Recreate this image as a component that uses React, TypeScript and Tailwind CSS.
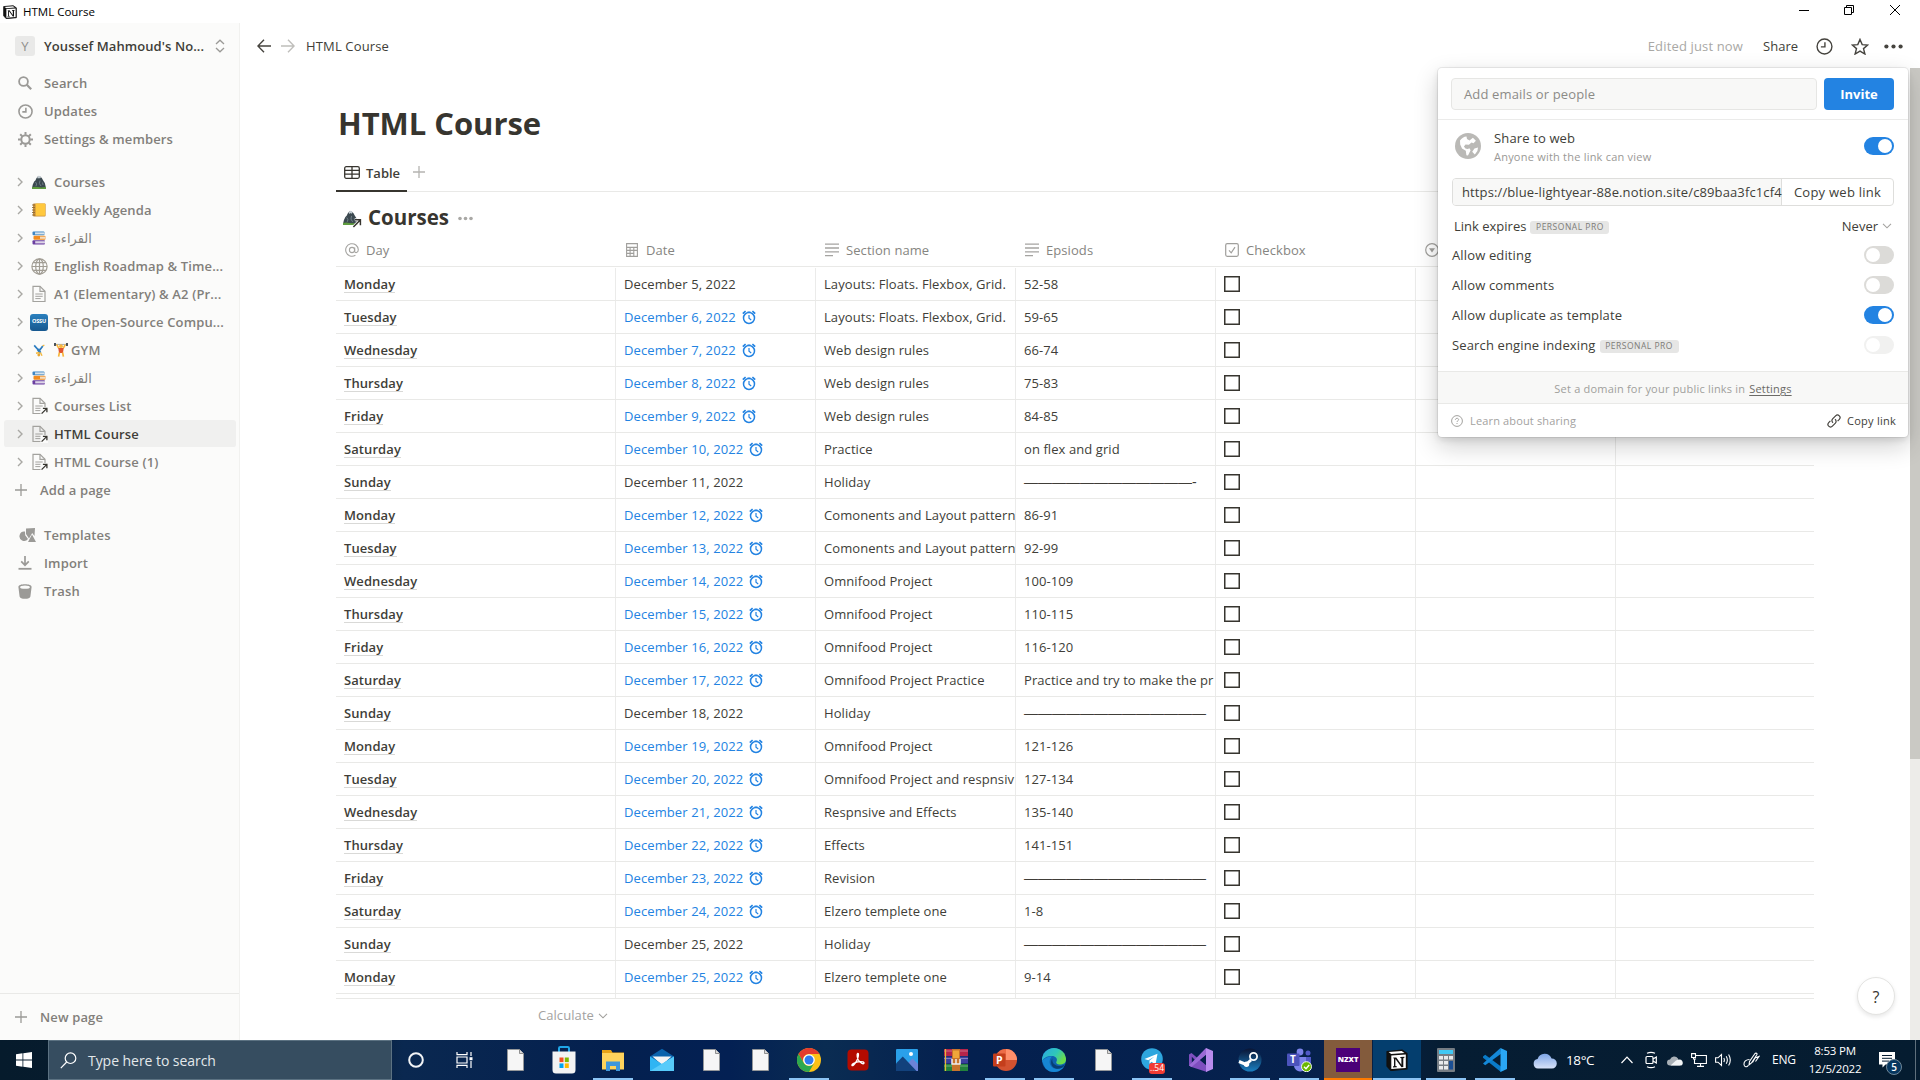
import React from "react";

const SANS = "font-['Open_Sans','Noto_Sans',sans-serif]";

type Row = [string, string, boolean, string, string];

const DASH = "—";
const rows: Row[] = [
  ["Monday", "December 5, 2022", false, "Layouts: Floats. Flexbox, Grid.", "52-58"],
  ["Tuesday", "December 6, 2022", true, "Layouts: Floats. Flexbox, Grid.", "59-65"],
  ["Wednesday", "December 7, 2022", true, "Web design rules", "66-74"],
  ["Thursday", "December 8, 2022", true, "Web design rules", "75-83"],
  ["Friday", "December 9, 2022", true, "Web design rules", "84-85"],
  ["Saturday", "December 10, 2022", true, "Practice", "on flex and grid"],
  ["Sunday", "December 11, 2022", false, "Holiday", DASH.repeat(12) + "-"],
  ["Monday", "December 12, 2022", true, "Comonents and Layout pattern", "86-91"],
  ["Tuesday", "December 13, 2022", true, "Comonents and Layout pattern", "92-99"],
  ["Wednesday", "December 14, 2022", true, "Omnifood Project", "100-109"],
  ["Thursday", "December 15, 2022", true, "Omnifood Project", "110-115"],
  ["Friday", "December 16, 2022", true, "Omnifood Project", "116-120"],
  ["Saturday", "December 17, 2022", true, "Omnifood Project Practice", "Practice and try to make the pr"],
  ["Sunday", "December 18, 2022", false, "Holiday", DASH.repeat(13)],
  ["Monday", "December 19, 2022", true, "Omnifood Project", "121-126"],
  ["Tuesday", "December 20, 2022", true, "Omnifood Project and respnsiv", "127-134"],
  ["Wednesday", "December 21, 2022", true, "Respnsive and Effects", "135-140"],
  ["Thursday", "December 22, 2022", true, "Effects", "141-151"],
  ["Friday", "December 23, 2022", true, "Revision", DASH.repeat(13)],
  ["Saturday", "December 24, 2022", true, "Elzero templete one", "1-8"],
  ["Sunday", "December 25, 2022", false, "Holiday", DASH.repeat(13)],
  ["Monday", "December 25, 2022", true, "Elzero templete one", "9-14"],
];

/* ---------- small icons ---------- */

function Mountain({ size = 14 }: { size?: number }) {
  return (
    <svg width={size} height={size} viewBox="0 0 14 14">
      <path d="M0 13 .8 9.5 2.2 6.6 3.4 5.4 4.4 3.2 5.8 1.4 8.2 1.4 9.8 3 11.2 5.6 12.8 8 14 13Z" fill="#3c4950" />
      <path d="M5.2 2.6 6.4.8 8 1 9 2.6 7.8 3.6 7 2.8 6 3.8Z" fill="#c4cdd2" />
      <path d="M3.5 7 4.6 9 4 11M8 5.5 7.4 8.5 9 11M10.5 7.5 11 10" stroke="#7b8a93" strokeWidth=".8" fill="none" />
      <path d="M0 12.2Q3 11.3 6 12.1T14 12V14H0Z" fill="#5f9c3f" />
    </svg>
  );
}

function Ledger() {
  return (
    <svg width="14" height="14" viewBox="0 0 14 14">
      <rect x="1" y=".5" width="12.6" height="13" rx="1" fill="#c98f3a" />
      <rect x="3.6" y=".5" width="9.6" height="12.2" rx=".8" fill="#ffc83d" />
      <path d="M0 2h3M0 4.5h3M0 7h3M0 9.5h3M0 12h3" stroke="#8a6a3a" strokeWidth=".9" />
    </svg>
  );
}

function Books() {
  return (
    <svg width="14" height="14" viewBox="0 0 14 14">
      <rect x=".5" y=".5" width="12" height="3.8" rx="1" fill="#3f87c4" />
      <rect x="3" y="1.4" width="9.5" height="2" fill="#d7e3ec" />
      <rect x="1.5" y="4.7" width="12" height="4" rx="1" fill="#f28b1d" />
      <rect x="8" y="5.6" width="5.6" height="2.2" fill="#f3dcc0" />
      <rect x=".5" y="9.2" width="12.5" height="4.3" rx="1" fill="#6b3fa0" />
      <rect x="3.2" y="10.2" width="9.8" height="2.2" fill="#ddd4e8" />
    </svg>
  );
}

function GlobeLines() {
  return (
    <svg width="17" height="17" viewBox="0 0 17 17" fill="none" stroke="#a19d94" strokeWidth="1.2">
      <circle cx="8.5" cy="8.5" r="7.6" />
      <ellipse cx="8.5" cy="8.5" rx="3.8" ry="7.6" />
      <path d="M8.5 1v15M1 8.5h15M2.2 4.7h12.6M2.2 12.3h12.6" />
    </svg>
  );
}

function Page({ linked = false }: { linked?: boolean }) {
  return (
    <svg width="17" height="18" viewBox="0 0 17 18" fill="none">
      <path d="M2 1.3h7L14 6.3V16.5H2Z" stroke="#a3a29e" strokeWidth="1.2" />
      <path d="M9 1.3V6.3h5" stroke="#a3a29e" strokeWidth="1.2" />
      <path d="M4.3 9h7.4M4.3 11.3h7.4M4.3 13.6h5.4" stroke="#a3a29e" strokeWidth="1" />
      {linked && (
        <>
          <path d="M9.5 10h7.5v8H9.5Z" fill="#fbfbfa" />
          <path d="M10.6 16.6 15.6 11.6M11.9 11.3h4v4" stroke="#37352f" strokeWidth="1.3" />
        </>
      )}
    </svg>
  );
}

function Ossu() {
  return (
    <span className="flex h-[17px] w-[18px] shrink-0 items-center justify-center rounded-[3px] bg-gradient-to-b from-[#2a80be] to-[#17588f]">
      <span className="text-[5.5px] leading-none font-bold tracking-[-0.1px] text-white">OSSU</span>
    </span>
  );
}

function Cartwheel() {
  return (
    <svg width="12" height="14" viewBox="0 0 12 14" fill="none">
      <path d="M5.8 7.5 1.2 2.4M6.8 7 9.8 3" stroke="#2b7cc0" strokeWidth="1.7" />
      <path d="M5 6 7.2 10" stroke="#2b7cc0" strokeWidth="2.6" />
      <path d="M6.6 9.5 3 10.2M7.4 9.5 9 12.8M9.6 3 11.4 2" stroke="#f5b83d" strokeWidth="1.4" />
      <circle cx="5.8" cy="12" r="1.4" fill="#e8a52e" />
    </svg>
  );
}

function Lifter() {
  return (
    <svg width="14" height="14" viewBox="0 0 14 14" fill="none">
      <path d="M.5 1.4h13" stroke="#8d959b" strokeWidth=".8" />
      <path d="M1 0v3M13 0v3" stroke="#3c454c" strokeWidth="1.8" />
      <path d="M2.7 1.5 4.8 5.4M11.3 1.5 9.2 5.4" stroke="#f7b63c" strokeWidth="1.6" />
      <circle cx="7" cy="3.2" r="1.9" fill="#f7b63c" />
      <path d="M4.3 5h5.4L9 10H5Z" fill="#e0542f" />
      <path d="M5.4 9.5 4.6 13.6M8.6 9.5 9.4 13.6" stroke="#f7b63c" strokeWidth="1.7" />
    </svg>
  );
}

function Caret() {
  return (
    <svg className="w-2 shrink-0" width="8" height="10" viewBox="0 0 8 10" fill="none" stroke="#a9a8a4" strokeWidth="1.4">
      <path d="M2 1 6 5 2 9" />
    </svg>
  );
}

function ChevDown({ color = "#a3a29f" }: { color?: string }) {
  return (
    <svg width="10" height="6" viewBox="0 0 10 6" fill="none" stroke={color} strokeWidth="1.1">
      <path d="M1 .8 5 4.8 9 .8" />
    </svg>
  );
}

function Plus({ color = "#9b9a97" }: { color?: string }) {
  return (
    <svg width="12" height="12" viewBox="0 0 12 12" stroke={color} strokeWidth="1.3">
      <path d="M6 0v12M0 6h12" />
    </svg>
  );
}

function Alarm() {
  return (
    <svg className="ml-[6px] shrink-0" width="14" height="15" viewBox="0 0 14 15" fill="none" stroke="#2383e2">
      <circle cx="7" cy="8" r="5.5" strokeWidth="1.5" />
      <path d="M7 5v3.2L9.2 10" strokeWidth="1.2" />
      <path d="M.8 3.6 3.6 1.2M13.2 3.6 10.4 1.2" strokeWidth="1.7" />
      <path d="M5.4 1.9h3.2" strokeWidth=".8" />
    </svg>
  );
}

function Clock({ size, color, w = 1.5 }: { size: number; color: string; w?: number }) {
  return (
    <svg width={size} height={size} viewBox="0 0 16 16" fill="none" stroke={color} strokeWidth={w}>
      <circle cx="8" cy="8" r="7" />
      <path d="M8.4 4v4.4H4.6" />
    </svg>
  );
}

/* ---------- sidebar ---------- */

function SideAction({ icon, label }: { icon: React.ReactNode; label: string }) {
  return (
    <div className="flex h-7 items-center">
      <span className="flex w-[50px] shrink-0 justify-center">{icon}</span>
      <span className="-ml-[6px]">{label}</span>
    </div>
  );
}

const ARABIC = "pt-px font-['DejaVu_Sans',sans-serif] font-normal text-[13px] tracking-normal";

const pages: { icon: React.ReactNode; label: React.ReactNode; ls?: string; active?: boolean }[] = [
  { icon: <Mountain />, label: "Courses" },
  { icon: <Ledger />, label: "Weekly Agenda" },
  { icon: <Books />, label: "القراءة", ls: ARABIC },
  { icon: <GlobeLines />, label: "English Roadmap & Time..." },
  { icon: <Page />, label: "A1 (Elementary) & A2 (Pr..." },
  { icon: <Ossu />, label: "The Open-Source Compu..." },
  { icon: <Cartwheel />, label: (<span className="flex items-center gap-[3px]"><Lifter />GYM</span>) },
  { icon: <Books />, label: "القراءة", ls: ARABIC },
  { icon: <Page linked />, label: "Courses List" },
  { icon: <Page linked />, label: "HTML Course", active: true },
  { icon: <Page linked />, label: "HTML Course (1)" },
];

function Sidebar() {
  return (
    <aside className="flex w-[240px] shrink-0 flex-col border-r border-[#f1f1ef] bg-[#fbfbfa] text-[13px] leading-5 font-semibold tracking-[0.14px] whitespace-nowrap text-[#827f7b]">
      <div className="flex h-[46px] items-center pl-[15px] text-[#403e38]">
        <span className="flex size-5 items-center justify-center rounded-[3px] bg-[#e9e9e8] text-[13px] font-normal text-[#8f8e8b]">Y</span>
        <span className="ml-[9px] w-[160px] tracking-[0.08px]">Youssef Mahmoud's No...</span>
        <svg className="ml-[11px]" width="10" height="14" viewBox="0 0 10 14" fill="none" stroke="#9b9a97" strokeWidth="1.3">
          <path d="M1 5 5 1.2 9 5M1 9 5 12.8 9 9" />
        </svg>
      </div>
      <SideAction
        label="Search"
        icon={
          <svg width="14" height="14" viewBox="0 0 14 14" fill="none" stroke="#9b9a97">
            <circle cx="5.5" cy="5.5" r="4.4" strokeWidth="1.8" />
            <path d="M8.8 8.8 13.2 13.2" strokeWidth="2.2" />
          </svg>
        }
      />
      <SideAction label="Updates" icon={<Clock size={15} color="#9b9a97" w={1.7} />} />
      <SideAction
        label="Settings & members"
        icon={
          <svg width="15" height="15" viewBox="0 0 15 15" fill="none" stroke="#9b9a97">
            <circle cx="7.5" cy="7.5" r="4.2" strokeWidth="2" />
            <path d="M7.5 0v2.8M7.5 12.2V15M0 7.5h2.8M12.2 7.5H15M2.2 2.2 4.2 4.2M10.8 10.8 12.8 12.8M2.2 12.8 4.2 10.8M10.8 4.2 12.8 2.2" strokeWidth="2" />
          </svg>
        }
      />
      <div className="mt-[15px]">
        {pages.map((p, i) => (
          <div
            key={i}
            className={
              p.active
                ? "mr-[3px] ml-1 flex h-7 items-center rounded-[3px] border-b border-[#fbfbfa] bg-[#f0f0ef] pl-3 text-[#403e38]"
                : "mr-[3px] ml-1 flex h-7 items-center pl-3"
            }
          >
            <Caret />
            <span className="mx-[6px] flex w-[18px] shrink-0 justify-center">{p.icon}</span>
            <span className={p.ls ?? ""}>{p.label}</span>
          </div>
        ))}
      </div>
      <div className="flex h-7 items-center pl-[15px]">
        <Plus />
        <span className="ml-[13px]">Add a page</span>
      </div>
      <div className="mt-[17px]">
        <SideAction
          label="Templates"
          icon={
            <svg className="ml-1" width="17" height="14" viewBox="0 0 17 14" fill="#9b9a97">
              <path d="M7 .5 16 0 15.5 8 13.2 5 10 10.5 7 6Z" />
              <path d="M6 3.6A4.7 4.7 0 1 0 9 11L6.2 7.2Z" />
              <path d="M13 6.5 17 14H9Z" />
            </svg>
          }
        />
        <SideAction
          label="Import"
          icon={
            <svg width="14" height="14" viewBox="0 0 14 14" fill="none" stroke="#9b9a97">
              <path d="M7 0v9M3.2 5.4 7 9.2 10.8 5.4" strokeWidth="1.7" />
              <path d="M.5 12.8h13" strokeWidth="1.8" />
            </svg>
          }
        />
        <SideAction
          label="Trash"
          icon={
            <svg width="14" height="15" viewBox="0 0 14 15">
              <path d="M.4 3C.4 1 3.2.2 7 .2S13.6 1 13.6 3L12.4 12.4C12.2 14 10 14.8 7 14.8S1.8 14 1.6 12.4Z" fill="#9b9a97" />
              <ellipse cx="7" cy="3.2" rx="4.9" ry="1.6" fill="#fbfbfa" />
            </svg>
          }
        />
      </div>
      <div className="mt-auto flex h-[47px] items-center border-t border-[#e9e9e7] pl-[15px]">
        <Plus />
        <span className="ml-[13px]">New page</span>
      </div>
    </aside>
  );
}

/* ---------- table ---------- */

const GRID = "grid grid-cols-[280px_200px_200px_200px_200px_200px_198px]";
const CELL = "flex h-full items-center overflow-hidden border-r border-[#ebebea] pl-2 whitespace-nowrap";

function TextIcon() {
  return (
    <svg width="14" height="14" viewBox="0 0 14 14" stroke="#a5a4a1" strokeWidth="1.3">
      <path d="M0 1.2h14M0 5h14M0 8.8h14M0 12.6h8" />
    </svg>
  );
}

function HeaderCell({ icon, label }: { icon: React.ReactNode; label: string }) {
  return (
    <div className="flex items-center pl-[9px]">
      <span className="flex w-[14px] justify-center">{icon}</span>
      <span className="ml-[7px]">{label}</span>
    </div>
  );
}

function Table() {
  return (
    <div className="w-[1478px] text-[13px] leading-5 tracking-[0.08px] text-[#403e38]">
      <div className={GRID + " h-[33px] border-b border-[#e9e9e7] text-[#868581]"}>
        <HeaderCell
          label="Day"
          icon={
            <svg width="14" height="14" viewBox="0 0 14 14" fill="none" stroke="#a5a4a1" strokeWidth="1.1">
              <circle cx="7" cy="7" r="2.6" />
              <path d="M9.7 4.4V8.2C9.7 10.4 13.3 10 13.3 6.8A6.3 6.3 0 1 0 10.4 12.3" />
            </svg>
          }
        />
        <HeaderCell
          label="Date"
          icon={
            <svg width="12" height="14" viewBox="0 0 12 14" fill="none" stroke="#a09f9c" strokeWidth="1.1">
              <path d="M.6.6h10.8v12.8H.6ZM.6 4.4h10.8M.6 7.4h10.8M.6 10.4h7M4.1 4.4v9M7.8 4.4v9" />
            </svg>
          }
        />
        <HeaderCell label="Section name" icon={<TextIcon />} />
        <HeaderCell label="Epsiods" icon={<TextIcon />} />
        <HeaderCell
          label="Checkbox"
          icon={
            <svg width="14" height="14" viewBox="0 0 14 14" fill="none" stroke="#a09f9c" strokeWidth="1.2">
              <rect x=".7" y=".7" width="12.6" height="12.6" rx="1.5" />
              <path d="M4 7.4 6.2 9.8 10 4.2" />
            </svg>
          }
        />
        <HeaderCell
          label=""
          icon={
            <svg width="14" height="14" viewBox="0 0 14 14" fill="none" stroke="#a09f9c" strokeWidth="1.2">
              <circle cx="7" cy="7" r="6.3" />
              <path d="M4 5.2h6L7 9.6Z" fill="#a09f9c" stroke="none" />
            </svg>
          }
        />
      </div>
      <div className="mt-px">
        {rows.map(([day, date, remind, section, ep], i) => (
          <div key={i} className={GRID + " h-[33px] border-b border-[#e9e9e7]"}>
            <div className={CELL}>
              <span className="border-b border-[#d9d9d7] pt-[2px] leading-[15px] font-semibold tracking-[0.08px]">{day}</span>
            </div>
            <div className={remind ? CELL + " text-[#2383e2]" : CELL}>
              <span className="tracking-[0.1px]">{date}</span>
              {remind && <Alarm />}
            </div>
            <div className={CELL}>{section}</div>
            <div className={CELL}>
              <span className={ep.startsWith(DASH) ? "font-['Liberation_Sans',sans-serif] text-[14px] tracking-normal" : ""}>{ep}</span>
            </div>
            <div className={CELL}>
              <svg width="16" height="16" viewBox="0 0 16 16" fill="none" stroke="#37352f" strokeWidth="1.5">
                <path d="M.75.75h14.5v14.5H.75Z" />
              </svg>
            </div>
            <div className={CELL} />
            <div />
          </div>
        ))}
        <div className={GRID + " h-[5px] border-b border-[#e9e9e7]"}>
          {[0, 1, 2, 3, 4, 5].map((i) => (
            <div key={i} className="h-full border-r border-[#ebebea]" />
          ))}
        </div>
      </div>
      <div className="flex h-[33px] w-[272px] items-center justify-end gap-1 text-[#a3a29f]">
        <span className="pb-px">Calculate</span>
        <ChevDown />
      </div>
    </div>
  );
}

/* ---------- share panel ---------- */

function Toggle({ on = false, faint = false }: { on?: boolean; faint?: boolean }) {
  const tone = on
    ? "justify-end bg-[#2383e2]"
    : faint
      ? "justify-start bg-[#f1f1f0]"
      : "justify-start bg-[#dcdbd8]";
  return (
    <span className={"flex h-[18px] w-[30px] items-center rounded-full p-[2px] " + tone}>
      <span className="size-[14px] rounded-full bg-white" />
    </span>
  );
}

function ProBadge() {
  return (
    <span className="mt-[3px] ml-1 flex h-[13px] w-[79px] items-center justify-center rounded-[3px] bg-[#e6e6e5] text-[8.5px] leading-none tracking-[0.5px] text-[#7d7c78]">
      PERSONAL PRO
    </span>
  );
}

function OptionRow({ label, children, pro }: { label: string; children: React.ReactNode; pro?: boolean }) {
  return (
    <div className="flex h-[30px] items-center">
      <span>{label}</span>
      {pro && <ProBadge />}
      <span className="ml-auto">{children}</span>
    </div>
  );
}

function SharePanel() {
  return (
    <div className="absolute top-[45px] left-[1198px] flex h-[369px] w-[470px] flex-col overflow-hidden rounded-[4px] bg-white text-[13px] leading-5 tracking-[0.14px] whitespace-nowrap text-[#403e38] shadow-[0_0_0_1px_rgba(15,15,15,0.07),0_3px_6px_rgba(15,15,15,0.1),0_9px_24px_rgba(15,15,15,0.2)]">
      <div className="flex h-[52px] items-center border-b border-[#ebebea] pl-[13px]">
        <div className="flex h-8 w-[366px] items-center rounded-[4px] border border-[#e6e6e4] bg-[#f8f8f7] pl-3 text-[#8c8b87]">
          Add emails or people
        </div>
        <div className="ml-[7px] flex h-8 w-[70px] items-center justify-center rounded-[4px] bg-[#2383e2] font-bold tracking-normal text-white">
          Invite
        </div>
      </div>
      <div className="flex h-[52px] items-center pr-[14px] pl-[17px]">
        <svg width="26" height="26" viewBox="0 0 26 26">
          <circle cx="13" cy="13" r="13" fill="#bab9b6" />
          <path d="M5 7.5C6.5 5 9 3.6 11.5 3.4L12 6l2.5 1.6 3.4-2.8 3 3-2.4 2.4-2-.6-2.6 2.2-3.4-.4-1.5 2.2 2.4 1.6h3l1.2 2-2.6 5.4-1.6-.4-.6-4.4L7 15.6 5.2 11.4Z" fill="#fff" />
          <path d="M19.5 15.5 23 14.4 22.4 18l-2.6 3.4-2.6-2.6Z" fill="#fff" />
          <path d="M9 13.6 11.5 12.4 15.2 14.6 12.8 16 10.4 15.6Z" fill="#bab9b6" />
        </svg>
        <div className="ml-[13px] flex flex-col pt-[2px]">
          <span className="leading-[19px]">Share to web</span>
          <span className="text-[11px] leading-[18px] tracking-[0.22px] text-[#9a9996]">Anyone with the link can view</span>
        </div>
        <span className="ml-auto">
          <Toggle on />
        </span>
      </div>
      <div className="mt-[6px] ml-[14px] flex h-7 w-[442px] overflow-hidden rounded-[4px] border border-[#dededc]">
        <div className="flex w-[329px] items-center border-r border-[#dededc] bg-[#f8f8f7] pl-[9px] tracking-[0.12px]">
          https://blue-lightyear-88e.notion.site/c89baa3fc1cf4
        </div>
        <div className="flex flex-1 items-center justify-center tracking-[0.25px]">Copy web link</div>
      </div>
      <div className="mt-[6px] flex h-7 items-center pr-[16px] pl-4">
        <span className="tracking-normal">Link expires</span>
        <ProBadge />
        <span className="mr-[4px] ml-auto tracking-normal">Never</span>
        <ChevDown />
      </div>
      <div className="px-[14px]">
        <OptionRow label="Allow editing"><Toggle /></OptionRow>
        <OptionRow label="Allow comments"><Toggle /></OptionRow>
        <OptionRow label="Allow duplicate as template"><Toggle on /></OptionRow>
        <OptionRow label="Search engine indexing" pro><Toggle faint /></OptionRow>
      </div>
      <div className="mt-auto flex h-[33px] items-center justify-center gap-1 border-y border-[#e9e9e7] bg-[#f8f8f7] pt-[3px] text-[11px] tracking-[0.2px] text-[#a09f9c]">
        <span>Set a domain for your public links in</span>
        <span className="text-[#6b6a66] underline underline-offset-2">Settings</span>
      </div>
      <div className="flex h-[33px] items-center pr-3 pl-[13px] text-[11px]">
        <svg width="12" height="12" viewBox="0 0 12 12" fill="none" stroke="#a3a29f">
          <circle cx="6" cy="6" r="5.4" />
          <path d="M4.4 4.8C4.4 2.8 7.6 2.8 7.6 4.7 7.6 5.8 6 5.8 6 7M6 8v1" />
        </svg>
        <span className="ml-[7px] pt-px tracking-[0.15px] text-[#a3a29f]">Learn about sharing</span>
        <svg className="ml-auto" width="14" height="14" viewBox="0 0 14 14" fill="none" stroke="#45433e" strokeWidth="1.2">
          <path d="M6 8.8C4.6 7.6 4.6 6 5.6 4.9L8.6 1.8C9.7.7 11.2.7 12.3 1.8 13.3 2.8 13.2 4.4 12.3 5.4L10.6 7.1" />
          <path d="M8 5.2C9.4 6.4 9.4 8 8.4 9.1L5.4 12.2C4.3 13.3 2.8 13.3 1.7 12.2.7 11.2.8 9.6 1.7 8.6L3.4 6.9" />
        </svg>
        <span className="ml-[6px] pt-px tracking-[0.25px]">Copy link</span>
      </div>
    </div>
  );
}

/* ---------- main area ---------- */

function Main() {
  return (
    <main className="relative flex flex-1 flex-col bg-white">
      <header className="flex h-[45px] shrink-0 items-center pt-px pr-[17px] pl-[17px] text-[13px] leading-5 tracking-[0.15px] text-[#403e38]">
        <svg width="14" height="14" viewBox="0 0 14 14" fill="none" stroke="#45433e" strokeWidth="1.4">
          <path d="M14 7H1M7 .8.9 7 7 13.2" />
        </svg>
        <svg className="ml-[10px]" width="14" height="14" viewBox="0 0 14 14" fill="none" stroke="#bfbebb" strokeWidth="1.4">
          <path d="M0 7h13M7 .8 13.1 7 7 13.2" />
        </svg>
        <span className="ml-[11px]">HTML Course</span>
        <span className="ml-auto text-[#a9a8a5]">Edited just now</span>
        <span className="ml-5 tracking-normal">Share</span>
        <span className="ml-[18px]"><Clock size={17} color="#45433e" w={1.3} /></span>
        <svg className="ml-[18px]" width="18" height="17" viewBox="0 0 18 17" fill="none" stroke="#45433e" strokeWidth="1.4">
          <path d="M9 1.4 11.2 6.6 16.7 7 12.5 10.6 13.9 16 9 13.1 4.1 16 5.5 10.6 1.3 7 6.8 6.6Z" />
        </svg>
        <svg className="ml-[15px]" width="19" height="5" viewBox="0 0 19 5" fill="#45433e">
          <circle cx="2.4" cy="2.5" r="2.1" />
          <circle cx="9.5" cy="2.5" r="2.1" />
          <circle cx="16.6" cy="2.5" r="2.1" />
        </svg>
      </header>
      <div className="flex flex-1">
        <div className="flex-1 pl-24">
          <h1 className="mt-[33px] ml-[2px] h-[44px] text-[31px] leading-[44px] font-bold tracking-[-0.05px] text-[#37352f]">HTML Course</h1>
          <div className="mt-[8px] flex h-[39px] w-[1478px] items-start shadow-[inset_0_-1px_0_#e9e9e7]">
            <div className="flex h-[39px] w-[71px] items-center border-b-2 border-[#37352f] pt-px pl-2 text-[13px] leading-5 font-semibold text-[#403e38]">
              <svg width="16" height="13" viewBox="0 0 16 13" fill="none" stroke="#37352f" strokeWidth="1.3">
                <rect x=".7" y=".7" width="14.6" height="11.6" rx="1.5" />
                <path d="M.7 4.3h14.6M.7 8.2h14.6M8 .7v11.6" />
              </svg>
              <span className="ml-[6px] pt-[2px]">Table</span>
            </div>
            <span className="mt-[13px] ml-[6px]"><Plus color="#b5b4b1" /></span>
          </div>
          <div className="mt-[10px] flex h-[32px] items-center pl-[7px] text-[#37352f]">
            <span className="relative h-[16px] w-[19px]">
              <Mountain size={15} />
              <svg className="absolute right-0 -bottom-[2px]" width="10" height="10" viewBox="0 0 10 10" fill="none">
                <path d="M1.4 9 8 2.2M3 1.8h5.4v5.4" stroke="#fff" strokeWidth="3" />
                <path d="M1.4 9 8 2.2M3 1.8h5.4v5.4" stroke="#37352f" strokeWidth="1.5" />
              </svg>
            </span>
            <span className="ml-[6px] pb-[2px] text-[20.5px] leading-[30px] font-bold">Courses</span>
            <svg className="ml-[9px]" width="15" height="5" viewBox="0 0 15 5" fill="#a9a8a5">
              <circle cx="2" cy="2.5" r="1.8" />
              <circle cx="7.5" cy="2.5" r="1.8" />
              <circle cx="13" cy="2.5" r="1.8" />
            </svg>
          </div>
          <Table />
        </div>
        <div className="w-[10px] shrink-0 bg-[#edece9]">
          <div className="h-[691px] bg-[#cac9c4]" />
        </div>
      </div>
      <div className="absolute top-[954px] left-[1617px] flex size-[38px] items-center justify-center rounded-full border border-[#e4e4e2] bg-white pt-px text-[16px] text-[#37352f] shadow-[0_2px_4px_rgba(15,15,15,0.1)]">
        ?
      </div>
      <SharePanel />
    </main>
  );
}

/* ---------- taskbar ---------- */

function Blank() {
  return (
    <svg width="17" height="22" viewBox="0 0 17 22">
      <path d="M.5.5h12L16.5 4.5V21.5H.5Z" fill="#f6f6f6" stroke="#9b9b98" strokeWidth=".8" />
      <path d="M12.5.5V4.5h4" fill="#d9d9d9" stroke="#777" strokeWidth=".8" />
    </svg>
  );
}

const apps: { icon: React.ReactNode; state?: "open" | "nzxt" | "notion" }[] = [
  { icon: <Blank /> },
  {
    icon: (
      <svg width="24" height="28" viewBox="0 0 24 28">
        <path d="M7 6V2.2C7 1.4 7.6 1 8.3 1h7.4c.7 0 1.3.4 1.3 1.2V6" fill="none" stroke="#1fa7e8" strokeWidth="2" />
        <path d="M.5 5.5h23V24a3.5 3.5 0 0 1-3.5 3.5H4A3.5 3.5 0 0 1 .5 24Z" fill="#f3f3f3" />
        <path d="M7.5 11.5h4v4.6h-4Z" fill="#f25022" />
        <path d="M12.8 11.5h4v4.6h-4Z" fill="#7fba00" />
        <path d="M7.5 17.4h4V22h-4Z" fill="#00a4ef" />
        <path d="M12.8 17.4h4V22h-4Z" fill="#ffb900" />
      </svg>
    ),
  },
  {
    state: "open",
    icon: (
      <svg width="22" height="22" viewBox="0 0 22 22">
        <path d="M0 1h9l1.5 2.4H22V20H0Z" fill="#e8a317" />
        <path d="M0 4h22v16.5H0Z" fill="#ffd35c" />
        <path d="M4 12.5h14V22h-4v-5H8v5H4Z" fill="#3f97dc" />
      </svg>
    ),
  },
  {
    icon: (
      <svg width="24" height="24" viewBox="0 0 24 24">
        <path d="M0 8.5 12 .8l12 7.7V13H0Z" fill="#0a62ac" />
        <path d="M2.5 8.5h19L12 17Z" fill="#f4f4f4" />
        <path d="M0 8.5 12 16 24 8.5V23H0Z" fill="#2fb5f3" />
        <path d="M0 23 24 8.5V23Z" fill="#57cbfa" />
      </svg>
    ),
  },
  { icon: <Blank /> },
  { icon: <Blank /> },
  {
    state: "open",
    icon: (
      <svg width="24" height="24" viewBox="0 0 24 24">
        <circle cx="12" cy="12" r="12" fill="#fbc116" />
        <path d="M1.6 6A12 12 0 0 1 22.4 6H12A6 6 0 0 0 6.8 15Z" fill="#e33b2e" />
        <path d="M1.6 6A12 12 0 0 0 12 24L17.2 15A6 6 0 0 1 6.8 15Z" fill="#2da94f" />
        <circle cx="12" cy="12" r="5.8" fill="#fff" />
        <circle cx="12" cy="12" r="4.5" fill="#2f7bee" />
      </svg>
    ),
  },
  {
    icon: (
      <svg width="22" height="22" viewBox="0 0 22 22">
        <rect x=".5" y=".5" width="21" height="21" rx="4" fill="#b30b00" />
        <path d="M10.6 4.5C12.4 4 11 9.5 9.8 11.6 8.4 14.4 5.6 17.6 5 16.4 4.4 15 9 12.8 12.4 12.6c2.8-.2 5 .6 4.6 1.6-.8 1.4-4-.2-5.6-3.2C10.2 8.6 9.6 5 10.6 4.5Z" fill="none" stroke="#fff" strokeWidth="1.3" />
      </svg>
    ),
  },
  {
    icon: (
      <svg width="22" height="22" viewBox="0 0 22 22">
        <rect width="22" height="22" rx="1" fill="#2aa0ea" />
        <path d="M11 15 16.5 9.5 22 15v7H11Z" fill="#6d83d8" />
        <path d="M0 14.5 6.8 7.5 20.5 22H0Z" fill="#12417c" />
        <circle cx="15" cy="5" r="2" fill="#fff" />
      </svg>
    ),
  },
  {
    icon: (
      <svg width="24" height="22" viewBox="0 0 24 22">
        <path d="M0 0h24v7H0Z" fill="#b5244a" />
        <path d="M0 7.5h24v7H0Z" fill="#3c3f9e" />
        <path d="M0 15h24v7H0Z" fill="#22813c" />
        <path d="M0 2h24M0 9.5h24M0 17h24" stroke="#fff" strokeOpacity=".35" />
        <path d="M1.5 0v22" stroke="#e5b53a" strokeWidth="1.2" />
        <path d="M8 0h8v22H8Z" fill="#c8742c" />
        <path d="M9 1.5h6V9H9Z" fill="#f0a63a" />
        <path d="M8 10v5h8v-5M12 10v5" stroke="#eee" strokeWidth="1.5" fill="none" />
      </svg>
    ),
  },
  {
    state: "open",
    icon: (
      <svg width="24" height="22" viewBox="0 0 24 22">
        <circle cx="13" cy="11" r="11" fill="#d35230" />
        <path d="M13 0A11 11 0 0 1 24 11H13Z" fill="#ff8f6b" />
        <path d="M13 0A11 11 0 0 0 2 11H13Z" fill="#ed6c47" />
        <rect y="4.5" width="12.5" height="13" rx="1" fill="#c43e1c" />
        <text x="3" y="14.8" fontSize="10.5" fontWeight="700" fill="#fff">P</text>
      </svg>
    ),
  },
  {
    state: "open",
    icon: (
      <svg width="24" height="24" viewBox="0 0 24 24">
        <defs>
          <linearGradient id="edgeTop" x1="0" x2="1" y1="0" y2=".5">
            <stop offset="0" stopColor="#2aa7e6" />
            <stop offset=".6" stopColor="#2fc7b8" />
            <stop offset="1" stopColor="#6bdc4b" />
          </linearGradient>
          <clipPath id="edgeDisc">
            <circle cx="12" cy="12" r="12" />
          </clipPath>
        </defs>
        <g clipPath="url(#edgeDisc)">
          <path d="M0 0h24v24H0Z" fill="#0f62ae" />
          <path d="M0 0H24V12C24 15 21 16.5 18 16.5S13.5 15 14.5 13.5C16 10.5 13.5 8 10 8 5 8 1 10 0 13.5Z" fill="url(#edgeTop)" />
          <path d="M10 8.5C7 11 6.5 16 10.5 19.5 14 22 19 21 22 18.5L20 24H5L0 13C3 9.5 7 8 10 8.5Z" fill="#1686d4" />
          <path d="M10.5 10.5C9.5 14 12 17.5 16.5 18 19 18.2 21.5 17.5 23 16.2 21 21 15 22 11.5 19.5 8.5 17 8.5 12.5 10.5 10.5Z" fill="#073f75" />
        </g>
      </svg>
    ),
  },
  { icon: <Blank /> },
  {
    state: "open",
    icon: (
      <span className="relative">
        <svg width="24" height="24" viewBox="0 0 24 24">
          <circle cx="12" cy="11" r="10.8" fill="#2ea6de" />
          <path d="M4.5 11 17.5 5.8 15.5 16.5 11.5 13.8 9.5 15.8V12.5L14.5 8.5 8.3 12.2Z" fill="#fff" />
        </svg>
        <span className="absolute top-[15px] left-[9px] flex h-[11px] w-4 items-center justify-center rounded-[3px] bg-[#f23c34] text-[8.5px] leading-none text-white">..54</span>
      </span>
    ),
  },
  {
    icon: (
      <svg width="24" height="24" viewBox="0 0 24 24">
        <path d="M0 6.5 2.5 5 18 18V24L2.5 19 0 17.5Z" fill="#7f4fbf" />
        <path d="M2.8 8.8 6 12 2.8 15.2Z" fill="#061f4c" />
        <path d="M0 17.5 17 0 18 6 2.5 19Z" fill="#9a6ad6" />
        <path d="M17 0 24 3V21L17 24V7Z" fill="#b98cee" />
        <path d="M17 7.5V16.5L11.5 12Z" fill="#061f4c" />
      </svg>
    ),
  },
  {
    state: "open",
    icon: (
      <svg width="24" height="24" viewBox="0 0 24 24">
        <defs>
          <linearGradient id="steamBg" x1="0" x2="0" y1="0" y2="1">
            <stop offset="0" stopColor="#0a1433" />
            <stop offset="1" stopColor="#1a7fc0" />
          </linearGradient>
        </defs>
        <circle cx="12" cy="12" r="11.5" fill="url(#steamBg)" />
        <circle cx="15.5" cy="8.5" r="3.6" fill="none" stroke="#fff" strokeWidth="1.8" />
        <path d="M1 13.5 8 16.5 13 12" stroke="#fff" strokeWidth="3" fill="none" />
        <circle cx="8.5" cy="16.3" r="2.7" fill="#fff" />
      </svg>
    ),
  },
  {
    state: "open",
    icon: (
      <svg width="25" height="24" viewBox="0 0 25 24">
        <circle cx="13" cy="4" r="3.4" fill="#7b83eb" />
        <circle cx="21" cy="5" r="2.5" fill="#5059c9" />
        <path d="M16 9h8v6.5a4 4 0 0 1-8 1Z" fill="#5059c9" />
        <path d="M7 9h12v8a6 6 0 0 1-12 1Z" fill="#7b83eb" />
        <rect y="5.5" width="12.5" height="12.5" rx="1" fill="#4b53bc" />
        <text x="3" y="15.3" fontSize="10" fontWeight="700" fill="#fff">T</text>
        <circle cx="19.5" cy="18.7" r="5" fill="#6bb700" stroke="#fff" strokeWidth=".9" />
        <path d="M17 18.7 19 20.7 22.2 17" fill="none" stroke="#fff" strokeWidth="1.4" />
      </svg>
    ),
  },
  {
    state: "nzxt",
    icon: (
      <span className="flex size-6 items-center justify-center bg-[#4b0078] text-[7.5px] leading-none font-extrabold text-white">NZXT</span>
    ),
  },
  {
    state: "notion",
    icon: <NotionLogo size={22} />,
  },
  {
    state: "open",
    icon: (
      <svg width="18" height="24" viewBox="0 0 18 24">
        <rect width="18" height="24" rx="1" fill="#767d84" />
        <rect x="2" y="2" width="14" height="4" fill="#41c8f4" />
        <path d="M2 8h4v3.5H2ZM7 8h4v3.5H7ZM12 8h4v3.5h-4ZM2 13h4v3.5H2ZM7 13h4v3.5H7ZM2 18h4v3.5H2ZM7 18h4v3.5H7Z" fill="#e8eaec" />
        <path d="M12 13h4v8.5h-4Z" fill="#1b4f94" />
      </svg>
    ),
  },
  {
    state: "open",
    icon: (
      <svg width="24" height="24" viewBox="0 0 24 24">
        <path d="M0 8.5 2.2 6.8 18 18.5V24L0 9.8Z" fill="#0a7bc8" />
        <path d="M0 15.5 17.5 0 18 5.8 2.2 17.3Z" fill="#1488d8" />
        <path d="M17.5 0 24 3V21L17.5 24Z" fill="#2aa7f5" />
      </svg>
    ),
  },
];

function NotionLogo({ size }: { size: number }) {
  return (
    <svg width={size} height={size} viewBox="0 0 22 22">
      <path d="M1 2.5 16 1 21 4.5V20L5 21.5 1 17Z" fill="#111" stroke="#111" strokeWidth="1.2" strokeLinejoin="round" />
      <path d="M2.6 3 15.6 1.9 18.5 4 5.2 5Z" fill="#fff" />
      <path d="M5.3 6.4 19.8 5.4V18.9L5.3 20Z" fill="#fff" />
      <path d="M7.2 8.6 10.3 8.4 15.4 15.8V9.3L14.3 9V8L18.4 7.8V8.7L17.3 9.2V18L15.5 18.2 9.4 10V16.9L10.8 17.3V18.2L7 18.5V17.5L8 17.1V9.9Z" fill="#111" />
    </svg>
  );
}

function Taskbar() {
  return (
    <footer className="flex h-10 shrink-0 items-stretch bg-[linear-gradient(90deg,#061b2c_0%,#071d33_18%,#0a2850_21%,#04204f_32%,#032053_38%,#0a2c52_43%,#04204f_50%,#06214c_70%,#061d33_75%,#051c30_100%)] text-white">
      <div className="flex w-12 items-center justify-center">
        <svg width="16" height="16" viewBox="0 0 16 16" fill="#fff">
          <path d="M0 2.2 6.5 1.3V7.6H0ZM7.3 1.2 16 0V7.6H7.3ZM0 8.4H6.5V14.7L0 13.8ZM7.3 8.4H16V16L7.3 14.8Z" />
        </svg>
      </div>
      <div className="flex w-[344px] items-center border border-[#5c7282] bg-[#364d60] pl-[11px]">
        <svg width="17" height="17" viewBox="0 0 17 17" fill="none" stroke="#fff" strokeWidth="1.2">
          <circle cx="10.5" cy="6.2" r="5.3" />
          <path d="M6.7 10 .8 16.2" />
        </svg>
        <span className="ml-[11px] text-[14px] tracking-[-0.05px] text-[#e3e8eb]">Type here to search</span>
      </div>
      <div className="flex w-12 items-center justify-center">
        <svg width="16" height="18" viewBox="0 0 16 18" fill="none" stroke="#f2f4f6" strokeWidth="2">
          <circle cx="8" cy="9" r="6.8" />
        </svg>
      </div>
      <div className="flex w-12 items-center justify-center">
        <svg width="17" height="16" viewBox="0 0 17 16" fill="none" stroke="#fff" strokeWidth="1.2">
          <path d="M1 0V2.6H11V0M1 16V13.4H11V16M1 5h10v6H1ZM15 0V4M15 9V16" />
          <path d="M13.5 5.2h3v3h-3Z" fill="#fff" stroke="none" />
        </svg>
      </div>
      <div className="ml-[3px] flex gap-px">
        {apps.map((a, i) => (
          <div
            key={i}
            className={
              a.state === "nzxt"
                ? "flex w-12 flex-col items-center bg-[#835b3c]"
                : a.state === "notion"
                  ? "flex w-12 flex-col items-center bg-[#043e6e]"
                  : "flex w-12 flex-col items-center"
            }
          >
            <div className="flex h-[38px] items-center pt-[2px]">{a.icon}</div>
            {a.state === "open" && <div className="h-[2px] w-10 bg-[#8cc4f4]" />}
            {a.state === "nzxt" && <div className="h-[2px] w-12 bg-[#ff7a00]" />}
            {a.state === "notion" && <div className="h-[2px] w-12 bg-[#8cc4f4]" />}
          </div>
        ))}
      </div>
      <div className="ml-[14px] flex items-center text-[14px]">
        <svg width="24" height="17" viewBox="0 0 24 17">
          <defs>
            <linearGradient id="cloudFill" x1="0" x2="0" y1="0" y2="1">
              <stop offset="0" stopColor="#7ea5e6" />
              <stop offset="1" stopColor="#d7e2f8" />
            </linearGradient>
          </defs>
          <path d="M5 16.5A4.8 4.8 0 0 1 4.6 7 7.4 7.4 0 0 1 18.6 6.5 5 5 0 0 1 19 16.5Z" fill="url(#cloudFill)" />
        </svg>
        <span className="ml-[9px] w-[30px] text-[13.5px] tracking-[-0.4px]">18°C</span>
      </div>
      <div className="ml-[25px] flex items-center">
        <svg width="12" height="8" viewBox="0 0 12 8" fill="none" stroke="#fff" strokeWidth="1.2">
          <path d="M.5 7 6 1.2 11.5 7" />
        </svg>
        <svg className="ml-[12px]" width="12" height="18" viewBox="0 0 12 18" fill="none" stroke="#fff" strokeWidth="1.2">
          <rect x="1" y="5.5" width="7" height="7" rx="1" />
          <path d="M8 8 11.3 6V12L8 10M2 2.2Q6 .4 10 2.2M2 15.8Q6 17.6 10 15.8" />
        </svg>
        <svg className="ml-[10px]" width="16" height="11" viewBox="0 0 16 11">
          <path d="M3 10.5A3 3 0 0 1 3 4.5 4.5 4.5 0 0 1 11 3.5L13 10.5Z" fill="#a9b0b7" />
          <path d="M3.5 10.5 9 5.5C14 3 16 6 15.8 8.2 15.7 9.8 14.5 10.5 13.5 10.5Z" fill="#f2f4f6" />
        </svg>
        <svg className="ml-[8px]" width="16" height="14" viewBox="0 0 16 14" fill="none" stroke="#fff" strokeWidth="1.1">
          <path d="M5 2.5H15.4V10.5H3.5V6M.6.6H4.5V4.5H.6ZM2.5 4.5V6H5M9.5 10.5V13M6 13.4h7" />
        </svg>
        <svg className="ml-[8px]" width="17" height="14" viewBox="0 0 17 14" fill="none" stroke="#fff" strokeWidth="1.1">
          <path d="M.6 4.8H3L6.5 1.5V12.5L3 9.2H.6ZM8.8 5Q10 7 8.8 9M11.2 3.2Q13.5 7 11.2 10.8M13.6 1.5Q17 7 13.6 12.5" />
        </svg>
        <svg className="ml-[11px]" width="17" height="16" viewBox="0 0 17 16" fill="none" stroke="#fff" strokeWidth="1.1">
          <path d="M6 13 6.5 9.5 12 1.5C13 .5 14.5 1.5 13.8 2.8L8.5 11 6 13ZM6.5 7.5C3 7.5.8 9.5 1 12.5 1.2 15 4 15.5 5 13.5M9.5 10.5 12 6 16 4.5 12.5 9.5" />
        </svg>
        <span className="ml-[12px] w-6 text-[12px] tracking-[-0.2px]">ENG</span>
      </div>
      <div className="ml-[12px] flex w-[54px] flex-col items-center justify-center text-[11.5px] leading-[18px] tracking-[-0.2px] whitespace-nowrap">
        <span>8:53 PM</span>
        <span>12/5/2022</span>
      </div>
      <div className="relative ml-[17px] flex w-9 items-center">
        <svg width="16" height="16" viewBox="0 0 16 16">
          <path d="M0 0h16v12.5H6.5L3.5 15.5V12.5H0Z" fill="#fff" />
          <path d="M3 3.5h10M3 6.3h10M3 9.1h7" stroke="#061d33" strokeWidth="1" />
        </svg>
        <span className="absolute top-[19px] left-[7px] flex size-4 items-center justify-center rounded-full border border-[#6f8798] bg-[#06365f] text-[10px] font-semibold">5</span>
      </div>
      <div className="w-px bg-[#5f6f7c]" />
    </footer>
  );
}

function WindowBar() {
  return (
    <div className="flex h-[23px] shrink-0 items-center bg-white pl-[3px] text-[11.5px] text-black">
      <NotionLogo size={14} />
      <span className="ml-[6px]">HTML Course</span>
      <svg className="-mt-[3px] ml-auto" width="10" height="10" viewBox="0 0 10 10" stroke="#000">
        <path d="M0 5.5h10" />
      </svg>
      <svg className="-mt-[3px] ml-[35px]" width="10" height="10" viewBox="0 0 10 10" fill="none" stroke="#000">
        <path d="M.5 2.5h7v7h-7ZM2.5 2.5V.5h7v7H7.5" />
      </svg>
      <svg className="-mt-[3px] mr-[20px] ml-[36px]" width="10" height="10" viewBox="0 0 10 10" stroke="#000">
        <path d="M0 0 10 10M10 0 0 10" />
      </svg>
    </div>
  );
}

export default function App() {
  return (
    <div className={SANS + " flex h-[1080px] w-[1920px] flex-col overflow-hidden bg-white"}>
      <WindowBar />
      <div className="flex h-[1017px]">
        <Sidebar />
        <Main />
      </div>
      <Taskbar />
    </div>
  );
}
